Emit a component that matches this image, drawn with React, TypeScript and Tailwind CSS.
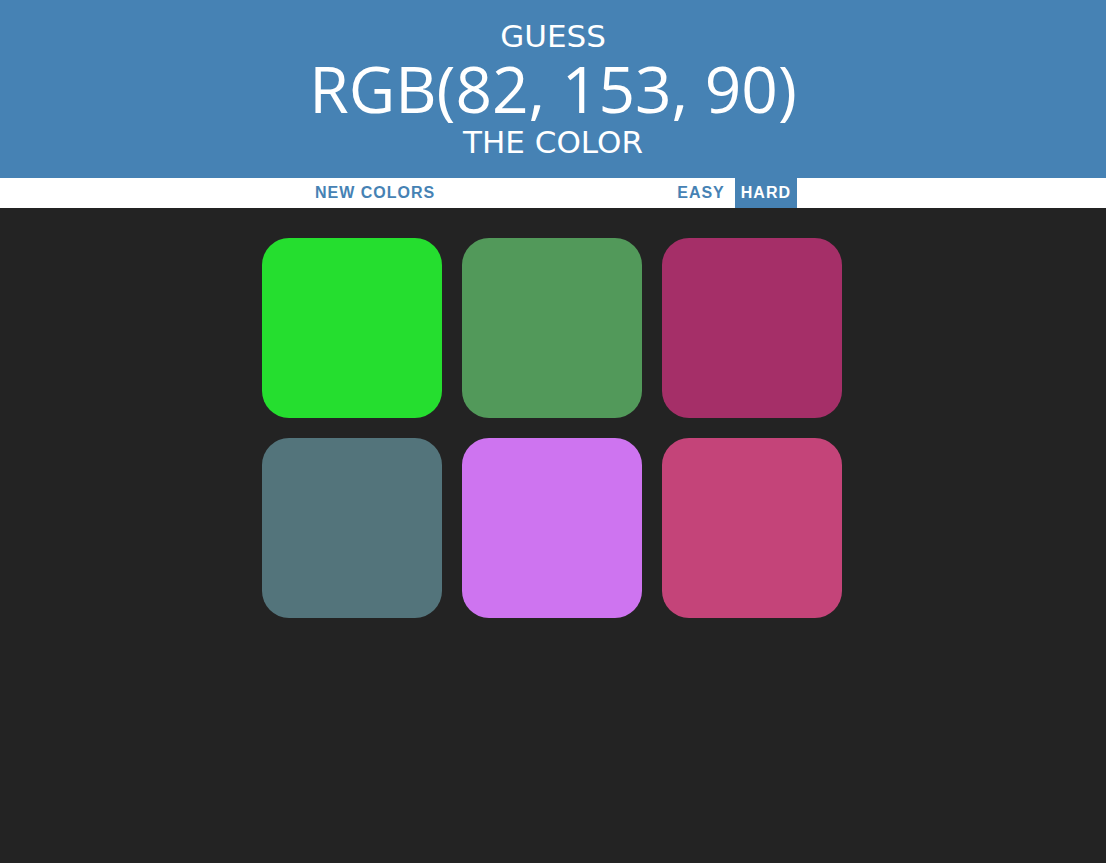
const squares = ['#25de2f', '#52995a', '#a52f68', '#53747b', '#ce74f0', '#c44479']

export default function App() {
  return (
    <div className="min-h-[863px] bg-[#232323]">
      <header className="flex h-[178px] flex-col items-center justify-center bg-[#4682b4] text-center uppercase text-white">
        <h1 className="font-['DejaVu_Sans',sans-serif] text-[31px] leading-[36px] font-normal">Guess</h1>
        <div className="font-['Open_Sans',sans-serif] text-[64px] leading-[70px] font-normal">RGB(82, 153, 90)</div>
        <h1 className="font-['DejaVu_Sans',sans-serif] text-[31px] leading-[36px] font-normal">The Color</h1>
      </header>

      <div className="flex h-[30px] items-stretch justify-center bg-white font-['Liberation_Sans',Arial,sans-serif] text-base font-bold tracking-[1px]">
        <button className="px-1.5 uppercase text-[#4682b4]">New Colors</button>
        <span className="w-[230px]"></span>
        <button className="px-1.5 uppercase text-[#4682b4]">Easy</button>
        <button className="ml-1 bg-[#4682b4] px-1.5 uppercase text-white">Hard</button>
      </div>

      <div className="mx-auto mt-[30px] w-[600px] pl-[9px]">
        <div className="flex w-[580px] flex-wrap gap-5">
          {squares.map((c) => (
            <div key={c} className="h-[180px] w-[180px] rounded-[27px]" style={{ backgroundColor: c }} />
          ))}
        </div>
      </div>
    </div>
  )
}
